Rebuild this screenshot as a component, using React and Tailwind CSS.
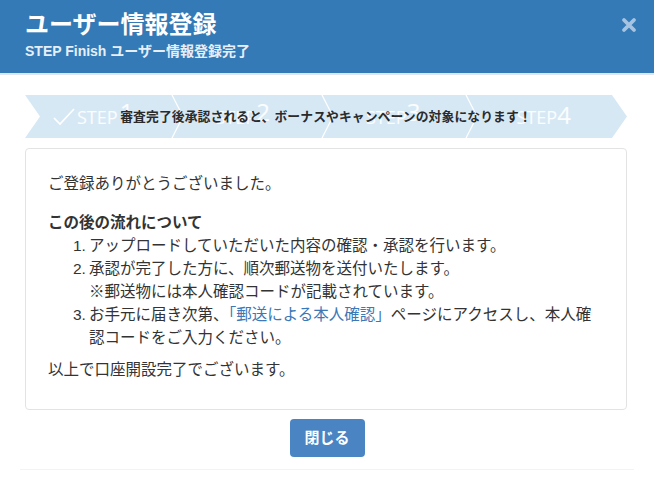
import React from "react";

const FONT = { fontFamily: '"Liberation Sans", "Noto Sans CJK JP", sans-serif' };

function StepBar() {
  return (
    <div className="relative h-[43px] w-[602px]">
      <svg className="absolute inset-0" width="602" height="43" viewBox="0 0 602 43">
        <polygon points="0,0 587,0 602,21.5 587,43 0,43 15,21.5" fill="#d7e8f5" />
        <polyline points="147,0 158,21.5 147,43" fill="none" stroke="#ffffff" strokeWidth="1.2" />
        <polyline points="297,0 308,21.5 297,43" fill="none" stroke="#ffffff" strokeWidth="1.2" />
        <polyline points="441,0 452,21.5 441,43" fill="none" stroke="#ffffff" strokeWidth="1.2" />
      </svg>
      <div className="absolute inset-0 grid grid-cols-4 text-white/90" style={{ fontFamily: '"Open Sans", "Liberation Sans", sans-serif' }}>
        <div className="flex items-center pl-[28px] gap-[2px]">
          <svg width="22" height="18" viewBox="0 0 22 18">
            <polyline points="1,10 7,16 21,1" fill="none" stroke="#ffffff" strokeWidth="1.6" />
          </svg>
          <span className="text-[18px] leading-none">STEP</span>
          <span className="text-[24px] leading-none -mt-[10px]">1</span>
        </div>
        <div className="flex items-center pl-[40px]">
          <span className="text-[18px] leading-none">STEP</span>
          <span className="text-[24px] leading-none -mt-[10px]">2</span>
        </div>
        <div className="flex items-center pl-[40px]">
          <span className="text-[18px] leading-none">STEP</span>
          <span className="text-[24px] leading-none -mt-[10px]">3</span>
        </div>
        <div className="flex items-center pl-[40px]">
          <span className="text-[18px] leading-none">STEP</span>
          <span className="text-[24px] leading-none -mt-[4px]">4</span>
        </div>
      </div>
      <div className="absolute inset-0 flex items-center justify-center pl-[0px] pt-[1px]">
        <span className="text-[12.8px] font-bold text-[#2b2b2b] tracking-[0.1px]">
          審査完了後承認されると、ボーナスやキャンペーンの対象になります！
        </span>
      </div>
    </div>
  );
}

export default function App() {
  return (
    <div className="w-[654px] h-[479px] bg-white overflow-hidden text-[#333]" style={FONT}>
      <div className="h-[75px] bg-[#337ab7] border-b-2 border-[#dfe6ee] flex justify-between px-[25px]">
        <div className="flex flex-col pt-[9px]">
          <div className="text-[24px] font-bold text-white leading-[31px]">ユーザー情報登録</div>
          <div className="text-[14px] font-bold text-[#e6eff8] leading-[18px] mt-[2px]">STEP Finish ユーザー情報登録完了</div>
        </div>
        <div className="pt-[17px] -mr-[8px]">
          <svg width="16" height="16" viewBox="0 0 16 16">
            <path d="M3 3 L13 13 M13 3 L3 13" stroke="#a6c4e2" strokeWidth="3.8" strokeLinecap="round" />
          </svg>
        </div>
      </div>
      <div className="px-[25px] pt-[20px]">
        <StepBar />
        <div className="mt-[10px] w-[602px] h-[262px] border border-[#e3e3e3] rounded-[4px] px-[22px] pt-[23px] text-[15.5px] leading-[23px]">
          <p>ご登録ありがとうございました。</p>
          <p className="mt-[16px] font-bold">この後の流れについて</p>
          <div className="pl-[25px]">
            <div className="flex">
              <span className="w-[16px] shrink-0">1.</span>
              <span>アップロードしていただいた内容の確認・承認を行います。</span>
            </div>
            <div className="flex">
              <span className="w-[16px] shrink-0">2.</span>
              <span>承認が完了した方に、順次郵送物を送付いたします。<br />※郵送物には本人確認コードが記載されています。</span>
            </div>
            <div className="flex">
              <span className="w-[16px] shrink-0">3.</span>
              <span className="whitespace-nowrap">お手元に届き次第、<span className="text-[#3b78b8]">「郵送による本人確認」</span>ページにアクセスし、本人確<br />認コードをご入力ください。</span>
            </div>
          </div>
          <p className="mt-[9px]">以上で口座開設完了でございます。</p>
        </div>
        <div className="flex justify-center pt-[9px] pb-[12px] border-b border-[#f1f3f5] -mx-[5px]">
          <button className="w-[75px] h-[38px] rounded-[4px] bg-[#4a84c3] text-white text-[15px] font-bold">閉じる</button>
        </div>
      </div>
    </div>
  );
}
